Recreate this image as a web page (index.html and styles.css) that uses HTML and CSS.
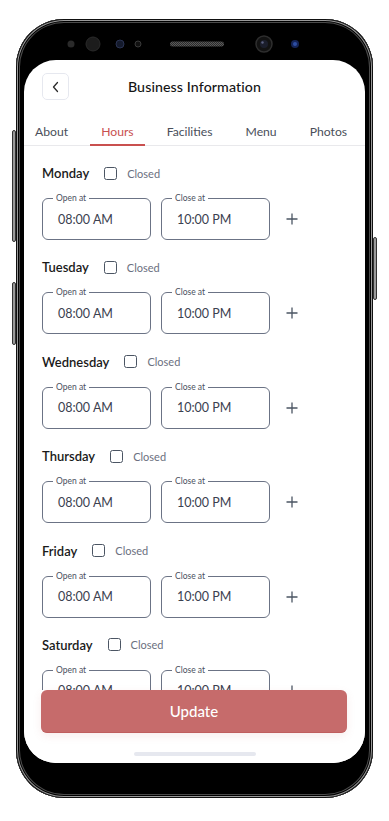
FILE: index.html
```html
<!DOCTYPE html>
<html lang="en">
<head>
<meta charset="utf-8">
<title>Business Information</title>
<link rel="stylesheet" href="styles.css">
</head>
<body>
<div class="phone">
  <span class="side-btn side-left-1"></span>
  <span class="side-btn side-left-2"></span>
  <span class="side-btn side-right"></span>
  <div class="bezel-top">
    <svg width="357" height="41" viewBox="0 0 357 41">
      <defs>
        <pattern id="grille" width="2" height="2" patternUnits="userSpaceOnUse">
          <rect width="2" height="2" fill="#2b2b2b"/>
          <rect width="1" height="1" fill="#5a5a5a"/>
          <rect x="1" y="1" width="1" height="1" fill="#5a5a5a"/>
        </pattern>
      </defs>
      <circle cx="55" cy="25" r="3.5" fill="#2a2a2a"/>
      <circle cx="77" cy="25" r="7" fill="#1c1c1c" stroke="#2a2a2a" stroke-width="1"/>
      <circle cx="104" cy="25" r="4" fill="#141a2c" stroke="#2a3352" stroke-width="1"/>
      <circle cx="122" cy="25" r="3" fill="#111" stroke="#3a3a3a" stroke-width="1"/>
      <rect x="154" y="22.5" width="54" height="5" rx="2.5" fill="url(#grille)"/>
      <circle cx="248" cy="25" r="8" fill="#121212" stroke="#2e2e2e" stroke-width="1.5"/>
      <circle cx="248" cy="25" r="4" fill="#1b1e2c"/>
      <circle cx="246.5" cy="23.5" r="1.2" fill="#5b6080"/>
      <circle cx="279" cy="25" r="4" fill="#142457"/>
      <circle cx="279" cy="25" r="2" fill="#2d4ea3"/>
    </svg>
  </div>
  <div class="screen">
    <header class="topbar">
      <button class="back-btn" aria-label="Back">
        <svg width="10" height="12" viewBox="0 0 10 12"><path d="M6.5 1.5 L2.5 6 L6.5 10.5" fill="none" stroke="#2b2b2b" stroke-width="1.3" stroke-linecap="round" stroke-linejoin="round"/></svg>
      </button>
      <h1 class="title">Business Information</h1>
      <span class="topbar-spacer"></span>
    </header>
    <nav class="tabs">
      <a class="tab">About</a>
      <a class="tab tab-active">Hours</a>
      <a class="tab">Facilities</a>
      <a class="tab">Menu</a>
      <a class="tab">Photos</a>
    </nav>
    <main class="days">
      <section class="day">
        <div class="day-head"><span class="day-name">Monday</span><label class="closed"><span class="checkbox"></span>Closed</label></div>
        <div class="times">
          <div class="field"><span class="field-label">Open at</span><span class="field-value">08:00 AM</span></div>
          <div class="field"><span class="field-label">Close at</span><span class="field-value">10:00 PM</span></div>
          <button class="add" aria-label="Add"><svg width="12" height="12" viewBox="0 0 12 12"><path d="M6 0.5 V11.5 M0.5 6 H11.5" stroke="#4b5563" stroke-width="1.3" fill="none"/></svg></button>
        </div>
      </section>
      <section class="day">
        <div class="day-head"><span class="day-name">Tuesday</span><label class="closed"><span class="checkbox"></span>Closed</label></div>
        <div class="times">
          <div class="field"><span class="field-label">Open at</span><span class="field-value">08:00 AM</span></div>
          <div class="field"><span class="field-label">Close at</span><span class="field-value">10:00 PM</span></div>
          <button class="add" aria-label="Add"><svg width="12" height="12" viewBox="0 0 12 12"><path d="M6 0.5 V11.5 M0.5 6 H11.5" stroke="#4b5563" stroke-width="1.3" fill="none"/></svg></button>
        </div>
      </section>
      <section class="day">
        <div class="day-head"><span class="day-name">Wednesday</span><label class="closed"><span class="checkbox"></span>Closed</label></div>
        <div class="times">
          <div class="field"><span class="field-label">Open at</span><span class="field-value">08:00 AM</span></div>
          <div class="field"><span class="field-label">Close at</span><span class="field-value">10:00 PM</span></div>
          <button class="add" aria-label="Add"><svg width="12" height="12" viewBox="0 0 12 12"><path d="M6 0.5 V11.5 M0.5 6 H11.5" stroke="#4b5563" stroke-width="1.3" fill="none"/></svg></button>
        </div>
      </section>
      <section class="day">
        <div class="day-head"><span class="day-name">Thursday</span><label class="closed"><span class="checkbox"></span>Closed</label></div>
        <div class="times">
          <div class="field"><span class="field-label">Open at</span><span class="field-value">08:00 AM</span></div>
          <div class="field"><span class="field-label">Close at</span><span class="field-value">10:00 PM</span></div>
          <button class="add" aria-label="Add"><svg width="12" height="12" viewBox="0 0 12 12"><path d="M6 0.5 V11.5 M0.5 6 H11.5" stroke="#4b5563" stroke-width="1.3" fill="none"/></svg></button>
        </div>
      </section>
      <section class="day">
        <div class="day-head"><span class="day-name">Friday</span><label class="closed"><span class="checkbox"></span>Closed</label></div>
        <div class="times">
          <div class="field"><span class="field-label">Open at</span><span class="field-value">08:00 AM</span></div>
          <div class="field"><span class="field-label">Close at</span><span class="field-value">10:00 PM</span></div>
          <button class="add" aria-label="Add"><svg width="12" height="12" viewBox="0 0 12 12"><path d="M6 0.5 V11.5 M0.5 6 H11.5" stroke="#4b5563" stroke-width="1.3" fill="none"/></svg></button>
        </div>
      </section>
      <section class="day">
        <div class="day-head"><span class="day-name">Saturday</span><label class="closed"><span class="checkbox"></span>Closed</label></div>
        <div class="times">
          <div class="field"><span class="field-label">Open at</span><span class="field-value">08:00 AM</span></div>
          <div class="field"><span class="field-label">Close at</span><span class="field-value">10:00 PM</span></div>
          <button class="add" aria-label="Add"><svg width="12" height="12" viewBox="0 0 12 12"><path d="M6 0.5 V11.5 M0.5 6 H11.5" stroke="#4b5563" stroke-width="1.3" fill="none"/></svg></button>
        </div>
      </section>
    </main>
    <div class="bottom-bar">
      <button class="update">Update</button>
      <div class="home-indicator"></div>
    </div>
  </div>
</div>
</body>
</html>
```
FILE: styles.css
```css
* { box-sizing: border-box; }
html, body { margin: 0; padding: 0; background: #fff; overflow: hidden; }
body { font-family: "Lato", "Noto Sans", sans-serif; color: #1f2328; }

.phone {
  position: relative;
  width: 357px;
  height: 779px;
  margin: 19px 0 0 16px;
  background: #000;
  border-radius: 48px;
  box-shadow: inset 0 0 0 1px #111, inset 0 0 0 2px #9a9a9a, inset 0 0 0 3px #000, inset 0 0 0 4px #4a4a4a, inset 0 0 0 5px #000;
  display: flex;
  flex-direction: column;
}
.side-btn {
  position: absolute;
  width: 4px;
  background: #9a9a9a;
  border: 1px solid #333;
  border-radius: 2px;
}
.side-left-1 { left: -4px; top: 111px; height: 112px; }
.side-left-2 { left: -4px; top: 263px; height: 63px; }
.side-right { right: -4px; top: 218px; height: 63px; }

.bezel-top { height: 41px; flex: 0 0 41px; }
.bezel-top svg { display: block; }

.screen {
  position: relative;
  margin: 0 8px;
  height: 703px;
  background: #fff;
  border-radius: 32px;
  overflow: hidden;
}

.topbar {
  display: grid;
  grid-template-columns: 27px 1fr 27px;
  align-items: center;
  padding: 13px 18px 0;
  height: 40px;
}
.back-btn {
  width: 27px;
  height: 27px;
  padding: 0;
  border: 1px solid #e6e8ef;
  border-radius: 5px;
  background: #fff;
  display: flex;
  align-items: center;
  justify-content: center;
}
.back-btn svg { display: block; }
.title {
  margin: 0;
  text-align: center;
  font-size: 14.2px;
  font-weight: 500;
  color: #151515;
  letter-spacing: 0.1px;
}

.tabs {
  display: flex;
  gap: 11px;
  margin-top: 23px;
  border-bottom: 1px solid #e9e9ec;
}
.tab {
  padding: 0 11px 3px;
  font-size: 12.2px;
  line-height: 18px;
  color: #4a4f5a;
  white-space: nowrap;
}
.tab-active {
  color: #c9504f;
  border-bottom: 2px solid #c9504f;
  margin-bottom: -1px;
}

.days {
  padding: 16px 18px 0;
}
.day { margin-bottom: 16.4px; }
.day-head {
  display: flex;
  align-items: center;
  height: 22px;
}
.day-name {
  font-size: 13px;
  font-weight: 600;
  color: #1a1a1a;
}
.closed {
  display: flex;
  align-items: center;
  gap: 10px;
  margin-left: 15px;
  font-size: 11px;
  color: #6b7080;
}
.checkbox {
  width: 13px;
  height: 13px;
  border: 1.3px solid #4b5563;
  border-radius: 2.5px;
}
.times {
  display: flex;
  align-items: center;
  margin-top: 14px;
}
.field {
  position: relative;
  flex: 0 0 109px;
  height: 42px;
  border: 1px solid #6b7385;
  border-radius: 6px;
  display: flex;
  align-items: center;
  padding-left: 15px;
}
.field + .field { margin-left: 10px; }
.field-label {
  position: absolute;
  top: -6px;
  left: 10px;
  padding: 0 3px;
  background: #fff;
  font-size: 8.5px;
  line-height: 11px;
  color: #4b5060;
}
.field-value {
  font-size: 12.5px;
  color: #3b4150;
}
.add {
  margin-left: 16px;
  padding: 0;
  border: 0;
  background: none;
  display: flex;
}

.bottom-bar {
  position: absolute;
  left: 0;
  right: 0;
  bottom: 0;
  height: 73px;
  background: #fff;
  display: flex;
  flex-direction: column;
  align-items: center;
}
.update {
  width: 306px;
  height: 43px;
  margin-right: 1px;
  border: 0;
  border-bottom: 1px solid #bf5e5e;
  border-radius: 6px;
  background: #c66b6b;
  color: #fff;
  font-family: "Lato", "Noto Sans", sans-serif;
  font-size: 15px;
  font-weight: 500;
  box-shadow: 0 3px 8px rgba(198, 107, 107, 0.12);
}
.home-indicator {
  margin-top: 19px;
  width: 122px;
  height: 4px;
  border-radius: 2px;
  background: #e6e8ef;
}
```
